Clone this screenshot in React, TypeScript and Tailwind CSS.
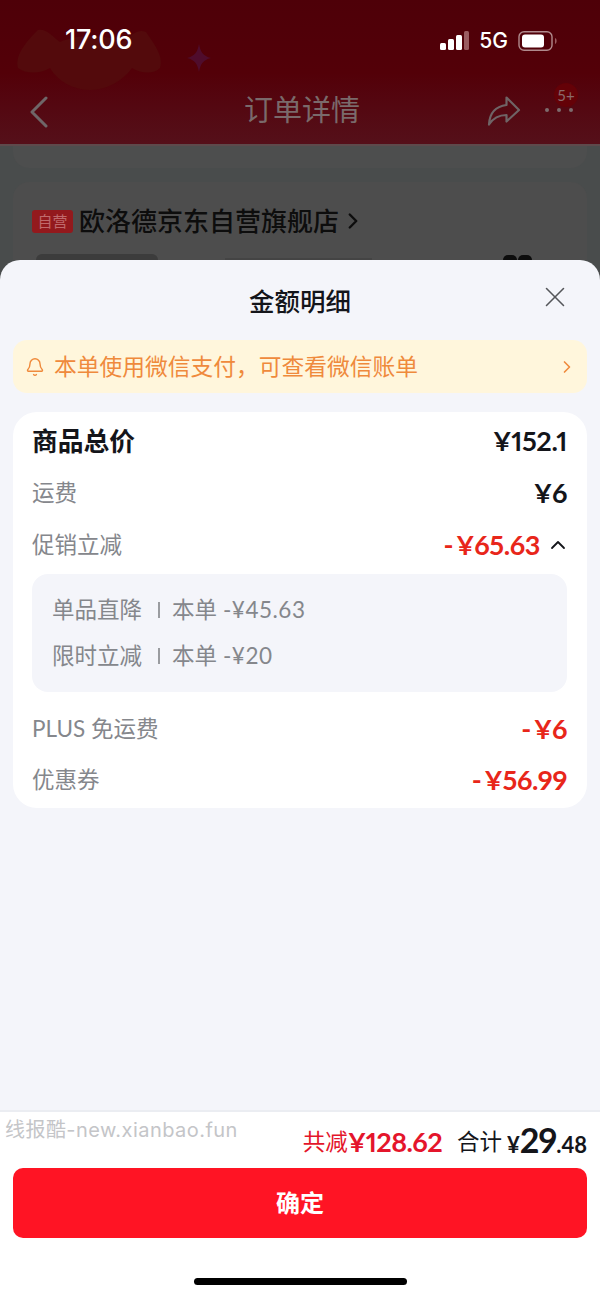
import { Bell, ChevronRight, ChevronUp, X } from "lucide-react";

const inter = "font-['Inter','Noto_Sans_CJK_SC',sans-serif]";
const lato = "font-['Lato','Noto_Sans_CJK_SC',sans-serif]";

function StatusBar() {
  return (
    <div className={`relative flex h-[84px] items-start justify-between pl-[65px] pr-[42px] pt-[24px] text-white ${inter}`}>
      <span className="text-[27px] font-medium leading-[32px] tracking-[-0.2px]">17:06</span>
      <div className="flex items-center gap-[10px] pt-[5px]">
        <svg className="-mr-[1px]" width="30" height="20" viewBox="0 0 30 20" fill="none">
          <rect x="0" y="12" width="6" height="7" rx="1.5" fill="#fff" />
          <rect x="8" y="8" width="6" height="11" rx="1.5" fill="#fff" />
          <rect x="16" y="4" width="6" height="15" rx="1.5" fill="#fff" />
          <rect x="24" y="0" width="5" height="19" rx="1.5" fill="#9a5b60" />
        </svg>
        <span className="text-[21px] font-medium leading-[24px]">5G</span>
        <svg width="40" height="20" viewBox="0 0 40 20" fill="none">
          <rect x="1" y="0.8" width="33" height="18.4" rx="5" stroke="#b08a8d" strokeWidth="1.4" />
          <rect x="4" y="3.5" width="22" height="13" rx="3" fill="#fff" />
          <path d="M37 7c1.200.4 1.600 1.600 1.600 3s-.4 2.600-1.600 3z" fill="#9a5b60" />
        </svg>
      </div>
    </div>
  );
}

function NavBar() {
  return (
    <div className="relative flex h-[60px] items-start justify-between pl-[29px] pr-[27px]">
      <svg className="mt-[12px]" width="20" height="32" viewBox="0 0 20 32" fill="none">
        <path d="M17 2 3 16l14 14" stroke="#6f6668" strokeWidth="3" strokeLinecap="round" strokeLinejoin="round" />
      </svg>
      <span className="absolute left-[4px] right-0 top-[6px] text-center text-[29px] leading-[40px] text-[#7a6a6b]">
        订单详情
      </span>
      <div className="flex items-center gap-[24px] pt-[12px]">
        <svg width="34" height="30" viewBox="0 0 34 30" fill="none">
          <path
            d="M19.500 1.500 32 14 19.500 25.500v-6.500C12 19 6.500 21.500 2 28.500c.5-10.500 6-18 17.500-19.500z"
            stroke="#6f6466"
            strokeWidth="2.200"
            strokeLinejoin="round"
          />
        </svg>
        <div className="flex gap-[8px] pb-[2px]">
          <span className="h-[4px] w-[4px] rounded-full bg-[#7d6b6d]" />
          <span className="h-[4px] w-[4px] rounded-full bg-[#7d6b6d]" />
          <span className="h-[4px] w-[4px] rounded-full bg-[#7d6b6d]" />
        </div>
      </div>
      <span className="absolute right-[22px] top-[-1px] flex h-[24px] w-[24px] items-center justify-center rounded-full bg-[#640107] text-[15px] leading-none text-[#8a6a6c]">
        5+
      </span>
    </div>
  );
}

function Header() {
  return (
    <div className="relative h-[146px] shrink-0 overflow-hidden bg-gradient-to-b from-[#4e0008] via-[#530008] to-[#55101a]">
      {/* mascot shape, barely visible behind the status bar */}
      <svg className="absolute left-[14px] top-[18px]" width="150" height="72" viewBox="0 0 150 72">
        <path
          d="M24 12c8-2 14 6 22 12 18-8 44-8 62 0 8-6 16-14 24-10 8 12 18 24 14 36-6 6-18 6-28 0-10 14-26 22-42 22s-32-8-40-22c-10 6-24 6-32 0-4-14 12-30 20-38z"
          fill="#530a0c"
        />
      </svg>
      <svg className="absolute left-[187px] top-[44px]" width="24" height="28" viewBox="0 0 24 28">
        <path d="M12 0c1.500 8 4 12 12 14-8 2-10.500 6-12 14-1.500-8-4-12-12-14 8-2 10.500-6 12-14z" fill="#4f0c2c" />
      </svg>
      <div className="relative">
        <StatusBar />
        <NavBar />
      </div>
      <div className="absolute bottom-0 h-[2px] w-full bg-[#5e4a4c]" />
    </div>
  );
}

function OrderBehind() {
  return (
    <div className="flex h-[114px] shrink-0 flex-col gap-[14px] overflow-hidden bg-[#494c4c]">
      <div className="mx-[13px] h-[22px] shrink-0 rounded-b-[16px] bg-[#4d4e4e]" />
      <div className="mx-[13px] h-[120px] shrink-0 rounded-t-[16px] bg-[#4d4d4d] pl-[19px] pt-[23px]">
        <div className="flex items-center">
          <span className="flex h-[23px] w-[41px] items-center justify-center rounded-[3px] bg-[#93191d] text-[15px] leading-none text-[#c06a6c]">
            自营
          </span>
          <span className="ml-[6px] text-[26px] font-medium leading-[32px] text-[#0d0d0d]">欧洛德京东自营旗舰店</span>
          <ChevronRight className="ml-[1px] text-[#0d0d0d]" size={26} strokeWidth={2.2} />
        </div>
        <div className="mt-[17px] flex items-start pl-[4px]">
          <div className="h-[6px] w-[122px] rounded-t-[10px] bg-[#3c3c3c]" />
          <div className="ml-[67px] mt-[4px] h-[2px] w-[147px] bg-[#444444]" />
          <div className="ml-[131px] mt-[1px] flex gap-[1px]">
            <div className="h-[5px] w-[14px] rounded-t-full bg-[#0d0d0d]" />
            <div className="h-[5px] w-[14px] rounded-t-full bg-[#0d0d0d]" />
          </div>
        </div>
      </div>
    </div>
  );
}

function Row({
  label,
  value,
  red,
  className,
  children,
}: {
  label: string;
  value: string;
  red?: boolean;
  className?: string;
  children?: React.ReactNode;
}) {
  return (
    <div className={`flex h-[52px] items-center justify-between ${className ?? ""}`}>
      <span className="text-[22.5px] leading-[30px] text-[#85878c]">{label}</span>
      <div className="flex items-center">
        <span className={`text-[27px] font-bold leading-[30px] proportional-nums tracking-[-0.4px] ${red ? "text-[#e8261a]" : "text-[#14151a]"}`}>
          {value}
        </span>
        {children}
      </div>
    </div>
  );
}

function Discount({ name, amount }: { name: string; amount: string }) {
  return (
    <div className="flex h-[46px] items-center text-[22.5px] leading-[30px] text-[#85878c]">
      <span className="w-[106px]">{name}</span>
      <span className="mr-[12px] h-[16px] w-[2px] bg-[#9a9ca0]" />
      <span>本单 </span>
      <span className="ml-[6px] tracking-[0.5px]">{amount}</span>
    </div>
  );
}

function Footer() {
  return (
    <div className="flex h-[188px] shrink-0 flex-col border-t-2 border-[#ebedf2] bg-white">
      <div className="relative flex h-[56px] items-center justify-end pr-[13px] pt-[4px]">
        <span className={`absolute left-[5px] top-[4px] text-[20px] leading-[28px] tracking-[0.45px] text-[#c4c5c8] ${inter}`}>
          线报酷-new.xianbao.fun
        </span>
        <span className="text-[22.5px] leading-[30px] text-[#e4152b]">共减</span>
        <span className="text-[27px] font-bold leading-[30px] proportional-nums tracking-[-0.6px] text-[#e4152b]">¥128.62</span>
        <span className="ml-[15px] text-[22.5px] leading-[30px] text-[#14151a]">合计</span>
        <span className="ml-[5px] flex items-baseline font-bold leading-[30px] text-[#14151a]">
          <span className="text-[22px]">¥</span>
          <span className="text-[34px] tracking-[-1.5px]">29</span>
          <span className="text-[22px]">.48</span>
        </span>
      </div>
      <button className="mx-[13px] flex h-[70px] items-center justify-center rounded-[10px] bg-[#ff1424] text-[24px] font-semibold text-white">
        确定
      </button>
      <div className="mt-[40px] flex justify-center">
        <div className="h-[7px] w-[213px] rounded-full bg-black" />
      </div>
    </div>
  );
}

export default function App() {
  return (
    <div className={`flex h-[1298px] w-[600px] flex-col overflow-hidden bg-[#494c4c] ${lato}`}>
      <Header />
      <OrderBehind />
      <div className="flex min-h-0 flex-1 flex-col overflow-hidden rounded-t-[20px] bg-[#f4f5fa]">
        <div className="relative flex h-[80px] shrink-0 items-center justify-center pt-[1px]">
          <span className="text-[25.5px] font-medium leading-[34px] text-[#14151a]">金额明细</span>
          <X className="absolute right-[28px] top-[20px] text-[#55565a]" size={34} strokeWidth={1.1} />
        </div>
        <div className="mx-[13px] flex h-[53px] shrink-0 items-center rounded-[14px] bg-[#fff6dc] pl-[12px] pr-[10px] text-[#ef8a3c]">
          <Bell size={20} strokeWidth={1.7} />
          <span className="ml-[9px] flex-1 text-[22.75px] leading-[30px]">本单使用微信支付，可查看微信账单</span>
          <ChevronRight size={20} strokeWidth={2} />
        </div>
        <div className="mx-[13px] mt-[19px] shrink-0 rounded-[24px] bg-white pb-[2px] pl-[19px] pr-[20px] pt-[4px]">
          <div className="flex h-[51px] items-center justify-between pb-[2px]">
            <span className="text-[25.75px] font-semibold leading-[32px] text-[#14151a]">商品总价</span>
            <span className="text-[27px] font-bold leading-[30px] proportional-nums tracking-[-0.4px] text-[#14151a]">¥152.1</span>
          </div>
          <Row label="运费" value="¥6" />
          <Row label="促销立减" value={"-\u2009¥65.63"} red>
            <ChevronUp className="-mr-[3px] ml-[6px] text-[#14151a]" size={24} strokeWidth={1.8} />
          </Row>
          <div className="mt-[3px] rounded-[16px] bg-[#f4f5fa] px-[20px] py-[13px]">
            <Discount name="单品直降" amount="-¥45.63" />
            <Discount name="限时立减" amount="-¥20" />
          </div>
          <div className="mt-[11px]">
            <Row label="PLUS 免运费" value={"-\u2009¥6"} red />
            <Row label="优惠券" value={"-\u2009¥56.99"} red className="-mt-px" />
          </div>
        </div>
        <div className="flex-1" />
        <Footer />
      </div>
    </div>
  );
}
